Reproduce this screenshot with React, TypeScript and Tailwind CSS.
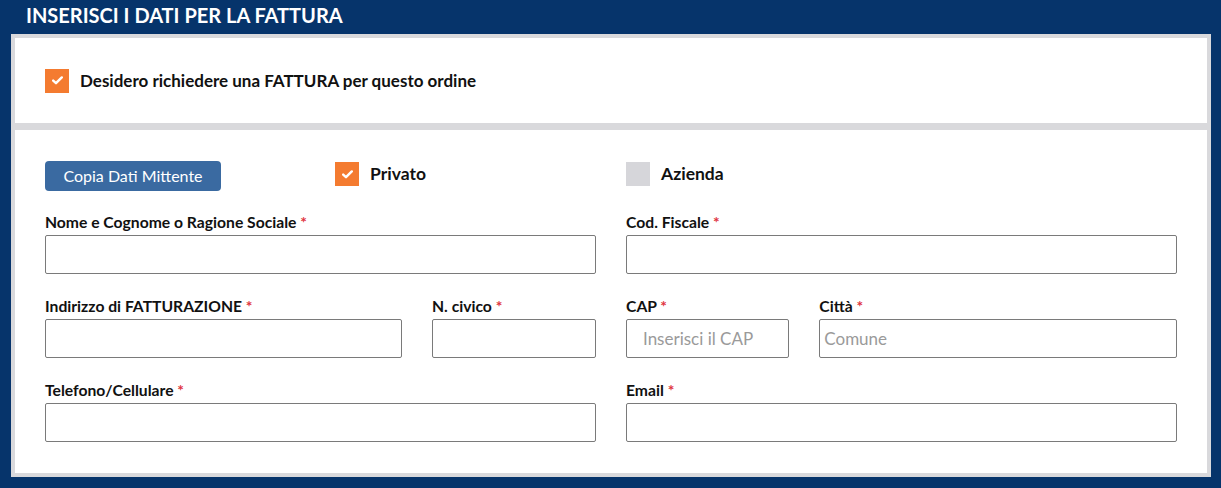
import React from "react";

function Check({ checked }: { checked: boolean }) {
  return (
    <span
      className={
        "flex h-[24px] w-[24px] shrink-0 items-center justify-center " +
        (checked ? "bg-[#f47b30]" : "bg-[#d6d6da]")
      }
    >
      {checked && (
        <svg width="11" height="9" viewBox="0 0 11 9">
          <path d="M1.2 4.6 L4 7.2 L9.8 1.4" fill="none" stroke="#fff" strokeWidth="2.4" strokeLinecap="round" strokeLinejoin="round" />
        </svg>
      )}
    </span>
  );
}

function Field({ label, placeholder, padLeft }: { label: string; placeholder?: string; padLeft?: boolean }) {
  return (
    <div className="flex flex-col">
      <label className="mb-[3px] h-[20px] text-[15.7px] font-bold leading-[20px] text-[#111]">
        {label} <span className="text-[#e0323d]">*</span>
      </label>
      <input
        placeholder={placeholder}
        className={
          "h-[39px] w-full rounded-[2px] border border-[#7a7a7a] bg-white text-[17px] text-[#333] outline-none placeholder:text-[#9a9a9a] " +
          (padLeft ? "pl-[16px]" : "pl-[4px]")
        }
      />
    </div>
  );
}

export default function App() {
  return (
    <div className="w-[1221px] h-[488px] bg-[#06346b] pl-[11px] pr-[10px] font-['Lato','Liberation_Sans',sans-serif]">
      <h2 className="h-[34px] pl-[15px] pt-[4px] text-[20px] font-bold leading-[22px] text-white">
        INSERISCI I DATI PER LA FATTURA
      </h2>
      <div className="flex flex-col gap-[7px] bg-[#d9d9dc] px-[4px] pt-[4px] pb-[4px]">
        <section className="flex h-[85px] items-center gap-[11px] bg-white px-[30px]">
          <Check checked />
          <span className="text-[17px] font-bold text-[#111]">Desidero richiedere una FATTURA per questo ordine</span>
        </section>

        <section className="bg-white px-[30px] pt-[31px] pb-[31px]">
          <div className="grid grid-cols-2 gap-x-[30px]">
            <div className="flex items-start">
              <button className="h-[30px] w-[176px] rounded-[4px] bg-[#3a6aa1] text-[16px] text-white">
                Copia Dati Mittente
              </button>
              <div className="ml-[114px] flex items-center gap-[11px]">
                <Check checked />
                <span className="text-[17.5px] font-bold text-[#111]">Privato</span>
              </div>
            </div>
            <div className="flex items-center gap-[11px] self-start">
              <Check checked={false} />
              <span className="text-[17.5px] font-bold text-[#111]">Azienda</span>
            </div>
          </div>

          <div className="mt-[21px] grid grid-cols-2 gap-x-[30px] gap-y-[22px]">
            <Field label="Nome e Cognome o Ragione Sociale" />
            <Field label="Cod. Fiscale" />

            <div className="grid grid-cols-[357fr_164fr] gap-x-[30px]">
              <Field label="Indirizzo di FATTURAZIONE" />
              <Field label="N. civico" />
            </div>
            <div className="grid grid-cols-[163fr_357fr] gap-x-[30px]">
              <Field label="CAP" placeholder="Inserisci il CAP" padLeft />
              <Field label="Città" placeholder="Comune" />
            </div>

            <Field label="Telefono/Cellulare" />
            <Field label="Email" />
          </div>
        </section>
      </div>
    </div>
  );
}
